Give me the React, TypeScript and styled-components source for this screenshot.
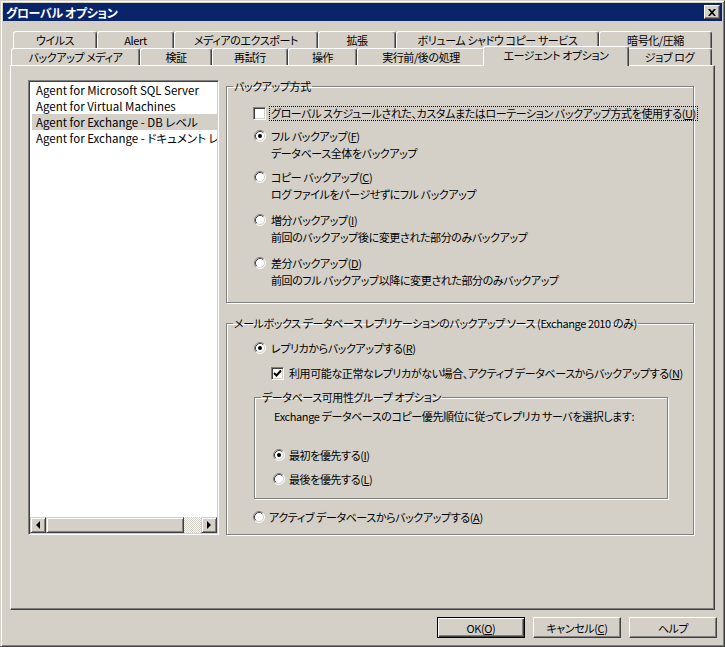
import React from "react";
import styled, { createGlobalStyle, css } from "styled-components";

const GlobalStyle = createGlobalStyle`
  html, body { margin: 0; padding: 0; background: #d4d0c8; }
  body {
    font-family: "Noto Sans CJK JP", "Noto Sans", sans-serif;
    font-size: 11px;
    letter-spacing: -0.4px;
    color: #000;
    font-feature-settings: "palt";
  }
  * { box-sizing: border-box; }
`;

const raised = css`
  border: 1px solid;
  border-color: #fff #404040 #404040 #fff;
  box-shadow: inset -1px -1px #808080;
`;

const sunken = css`
  border: 1px solid;
  border-color: #808080 #fff #fff #808080;
  box-shadow: inset 1px 1px #404040, inset -1px -1px #d4d0c8;
`;

const Window = styled.div`
  width: 725px;
  height: 647px;
  background: #d4d0c8;
  border: 1px solid;
  border-color: #d4d0c8 #404040 #404040 #d4d0c8;
  box-shadow: inset 1px 1px #fff, inset -1px -1px #808080;
  padding: 2px;
  display: flex;
  flex-direction: column;
`;

const Caption = styled.div`
  height: 18px;
  flex: none;
  background: #0a246a;
  color: #fff;
  font-weight: bold;
  font-size: 12px;
  display: flex;
  align-items: center;
  justify-content: space-between;
  padding: 0 2px 0 3px;
`;

const CloseButton = styled.div`
  ${raised};
  width: 16px;
  height: 14px;
  background: #d4d0c8;
  display: flex;
  align-items: center;
  justify-content: center;
`;

const TabControl = styled.div`
  margin: 10px 0 0 7px;
  width: 705px;
`;

const TabRow = styled.div<{ $indent: number }>`
  display: flex;
  height: 17px;
  padding-left: ${(p) => p.$indent}px;
`;

const Tab = styled.div<{ $w: number; $active?: boolean }>`
  flex: none;
  width: ${(p) => p.$w}px;
  height: 17px;
  background: #d4d0c8;
  border-top: 1px solid #fff;
  border-left: 1px solid #fff;
  border-right: 1px solid #404040;
  border-radius: 3px 3px 0 0;
  box-shadow: inset -1px 0 #808080;
  display: flex;
  align-items: center;
  justify-content: center;
  white-space: nowrap;
  line-height: 1;
  ${(p) =>
    p.$active &&
    css`
      width: ${p.$w + 4}px;
      height: 20px;
      margin: -2px -2px 0;
      padding-bottom: 2px;
      position: relative;
      z-index: 1;
    `}
`;

const Panel = styled.div`
  height: 545px;
  border: 1px solid;
  border-color: #fff #404040 #404040 #fff;
  box-shadow: inset -1px -1px #808080;
  display: flex;
  align-items: flex-start;
  gap: 7px;
  padding: 14px 0 0 17px;
`;

const ListBox = styled.div`
  ${sunken};
  width: 191px;
  height: 455px;
  padding: 1px;
  background: #fff;
  display: flex;
  flex-direction: column;
`;

const ListItems = styled.div`
  flex: 1;
  overflow: hidden;
`;

const ListItem = styled.div<{ $selected?: boolean }>`
  height: 16px;
  line-height: 16px;
  margin-left: 2px;
  padding-left: 4px;
  font-size: 11.5px;
  letter-spacing: 0;
  white-space: nowrap;
  overflow: hidden;
  background: ${(p) => (p.$selected ? "#d4d0c8" : "transparent")};
`;

const HScroll = styled.div`
  height: 16px;
  flex: none;
  display: flex;
`;

const ScrollPart = styled.div<{ $w?: number }>`
  border: 1px solid;
  border-color: #d4d0c8 #404040 #404040 #d4d0c8;
  box-shadow: inset 1px 1px #fff, inset -1px -1px #808080;
  background: #d4d0c8;
  width: ${(p) => p.$w ?? 16}px;
  height: 16px;
  flex: none;
  display: flex;
  align-items: center;
  justify-content: center;
`;

const ScrollTrack = styled.div`
  flex: 1;
  background: repeating-conic-gradient(#d4d0c8 0 25%, #fff 0 50%) 0 0 / 2px 2px;
`;

const Groups = styled.div`
  width: 468px;
  margin-top: -1px;
  display: flex;
  flex-direction: column;
  gap: 13px;
`;

const GroupBox = styled.fieldset<{ $h: number; $w?: number; $indent?: number; $top?: number }>`
  margin: ${(p) => p.$top ?? 0}px 0 0 ${(p) => p.$indent ?? 0}px;
  padding: 0;
  min-width: 0;
  width: ${(p) => (p.$w ? `${p.$w}px` : "auto")};
  height: ${(p) => p.$h}px;
  border: 1px solid #808080;
  box-shadow: inset 1px 1px #fff, 1px 1px #fff;
`;

const Legend = styled.legend`
  margin-left: 6px;
  padding: 0 1px;
  line-height: 14px;
  height: 14px;
  white-space: nowrap;
`;

const Row = styled.div<{ $indent: number; $top: number; $gap?: number }>`
  display: flex;
  align-items: center;
  height: 16px;
  line-height: 16px;
  margin: ${(p) => p.$top}px 0 0 ${(p) => p.$indent}px;
  gap: ${(p) => p.$gap ?? 5}px;
  white-space: nowrap;
`;

const Desc = styled.div<{ $indent: number }>`
  height: 16px;
  line-height: 16px;
  margin: 1px 0 0 ${(p) => p.$indent}px;
  white-space: nowrap;
`;

const PlainText = styled.div<{ $indent: number; $top: number }>`
  height: 16px;
  line-height: 16px;
  margin: ${(p) => p.$top}px 0 0 ${(p) => p.$indent}px;
  white-space: nowrap;
`;

const FocusLabel = styled.span`
  border: 1px dotted #000;
  padding: 0 1px;
  height: 15px;
  line-height: 13px;
  margin-left: -2px;
`;

const CheckBox = styled.span`
  ${sunken};
  width: 13px;
  height: 13px;
  flex: none;
  background: #fff;
  display: flex;
  align-items: center;
  justify-content: center;
`;

const ButtonBar = styled.div`
  display: flex;
  justify-content: flex-end;
  gap: 8px;
  margin-top: 7px;
  padding-right: 5px;
`;

const Button = styled.div<{ $default?: boolean }>`
  width: 88px;
  height: 21px;
  background: #d4d0c8;
  display: flex;
  align-items: center;
  justify-content: center;
  ${(p) =>
    p.$default
      ? css`
          border: 1px solid #000;
          box-shadow: inset 1px 1px #fff, inset -1px -1px #404040, inset -2px -2px #808080;
        `
      : raised}
`;

const Radio = ({ checked }: { checked?: boolean }) => (
  <svg width="12" height="12" viewBox="0 0 12 12" style={{ flex: "none" }}>
    <circle cx="6" cy="6" r="5" fill="#fff" />
    <path d="M2.11 9.89 A5.5 5.5 0 0 1 9.89 2.11" fill="none" stroke="#808080" />
    <path d="M9.89 2.11 A5.5 5.5 0 0 1 2.11 9.89" fill="none" stroke="#fff" />
    <path d="M2.82 9.18 A4.5 4.5 0 0 1 9.18 2.82" fill="none" stroke="#404040" />
    <path d="M9.18 2.82 A4.5 4.5 0 0 1 2.82 9.18" fill="none" stroke="#d4d0c8" />
    {checked && <circle cx="6" cy="6" r="2" fill="#000" />}
  </svg>
);

const Check = ({ checked }: { checked?: boolean }) => (
  <CheckBox>
    {checked && (
      <svg width="9" height="9" viewBox="0 0 9 9">
        <polyline points="1,4 3.5,6.5 8,1.5" fill="none" stroke="#000" strokeWidth="2" />
      </svg>
    )}
  </CheckBox>
);

const Arrow = ({ dir }: { dir: "left" | "right" }) => (
  <svg width="8" height="8" viewBox="0 0 8 8">
    <polygon points={dir === "left" ? "2,4 6,0 6,8" : "6,4 2,0 2,8"} fill="#000" />
  </svg>
);

const backRow = [
  { label: "ウイルス", w: 84 },
  { label: "Alert", w: 77 },
  { label: "メディアのエクスポート", w: 144 },
  { label: "拡張", w: 78 },
  { label: "ボリューム シャドウ コピー サービス", w: 203 },
  { label: "暗号化/圧縮", w: 113 },
];

const frontRow = [
  { label: "バックアップ メディア", w: 129 },
  { label: "検証", w: 72 },
  { label: "再試行", w: 76 },
  { label: "操作", w: 69 },
  { label: "実行前/後の処理", w: 128 },
  { label: "エージェント オプション", w: 142, active: true },
  { label: "ジョブ ログ", w: 85 },
];

const agents = [
  "Agent for Microsoft SQL Server",
  "Agent for Virtual Machines",
  "Agent for Exchange - DB レベル",
  "Agent for Exchange - ドキュメント レベル",
];

const methods = [
  { label: "フル バックアップ", key: "F", desc: "データベース全体をバックアップ", top: 7, checked: true },
  { label: "コピー バックアップ", key: "C", desc: "ログ ファイルをパージせずにフル バックアップ", top: 8 },
  { label: "増分バックアップ", key: "I", desc: "前回のバックアップ後に変更された部分のみバックアップ", top: 10 },
  { label: "差分バックアップ", key: "D", desc: "前回のフル バックアップ以降に変更された部分のみバックアップ", top: 10 },
];

const App = () => (
  <>
    <GlobalStyle />
    <Window>
      <Caption>
        <span>グローバル オプション</span>
        <CloseButton>
          <svg width="8" height="7" viewBox="0 0 8 7">
            <path d="M0 0H2L4 2.3L6 0H8L5.1 3.5L8 7H6L4 4.7L2 7H0L2.9 3.5Z" fill="#000" />
          </svg>
        </CloseButton>
      </Caption>

      <TabControl>
        <TabRow $indent={3}>
          {backRow.map((t) => (
            <Tab key={t.label} $w={t.w}>
              {t.label}
            </Tab>
          ))}
        </TabRow>
        <TabRow $indent={1}>
          {frontRow.map((t) => (
            <Tab key={t.label} $w={t.w} $active={t.active}>
              {t.label}
            </Tab>
          ))}
        </TabRow>

        <Panel>
          <ListBox>
            <ListItems>
              {agents.map((a, i) => (
                <ListItem key={a} $selected={i === 2}>
                  {a}
                </ListItem>
              ))}
            </ListItems>
            <HScroll>
              <ScrollPart>
                <Arrow dir="left" />
              </ScrollPart>
              <ScrollPart $w={138} />
              <ScrollTrack />
              <ScrollPart>
                <Arrow dir="right" />
              </ScrollPart>
            </HScroll>
          </ListBox>

          <Groups>
            <GroupBox $h={224}>
              <Legend>バックアップ方式</Legend>
              <Row $indent={26} $top={12}>
                <Check />
                <FocusLabel>
                  グローバル スケジュールされた、カスタムまたはローテーション バックアップ方式を使用する(<u>U</u>)
                </FocusLabel>
              </Row>
              {methods.map((m) => (
                <React.Fragment key={m.key}>
                  <Row $indent={27} $top={m.top}>
                    <Radio checked={m.checked} />
                    <span>
                      {m.label}(<u>{m.key}</u>)
                    </span>
                  </Row>
                  <Desc $indent={44}>{m.desc}</Desc>
                </React.Fragment>
              ))}
            </GroupBox>

            <GroupBox $h={219}>
              <Legend>メールボックス データベース レプリケーションのバックアップ ソース (Exchange 2010 のみ)</Legend>
              <Row $indent={27} $top={10}>
                <Radio checked />
                <span>
                  レプリカからバックアップする(<u>R</u>)
                </span>
              </Row>
              <Row $indent={44} $top={9}>
                <Check checked />
                <span>
                  利用可能な正常なレプリカがない場合、アクティブ データベースからバックアップする(<u>N</u>)
                </span>
              </Row>
              <GroupBox $h={109} $w={414} $indent={27} $top={9}>
                <Legend>データベース可用性グループ オプション</Legend>
                <PlainText $indent={19} $top={4}>
                  Exchange データベースのコピー優先順位に従ってレプリカ サーバを選択します:
                </PlainText>
                <Row $indent={18} $top={23} $gap={4}>
                  <Radio checked />
                  <span>
                    最初を優先する(<u>I</u>)
                  </span>
                </Row>
                <Row $indent={18} $top={8} $gap={4}>
                  <Radio />
                  <span>
                    最後を優先する(<u>L</u>)
                  </span>
                </Row>
              </GroupBox>
              <Row $indent={26} $top={10} $gap={4}>
                <Radio />
                <span>
                  アクティブ データベースからバックアップする(<u>A</u>)
                </span>
              </Row>
            </GroupBox>
          </Groups>
        </Panel>
      </TabControl>

      <ButtonBar>
        <Button $default>
          OK(<u>O</u>)
        </Button>
        <Button>
          キャンセル(<u>C</u>)
        </Button>
        <Button>ヘルプ</Button>
      </ButtonBar>
    </Window>
  </>
);

export default App;
